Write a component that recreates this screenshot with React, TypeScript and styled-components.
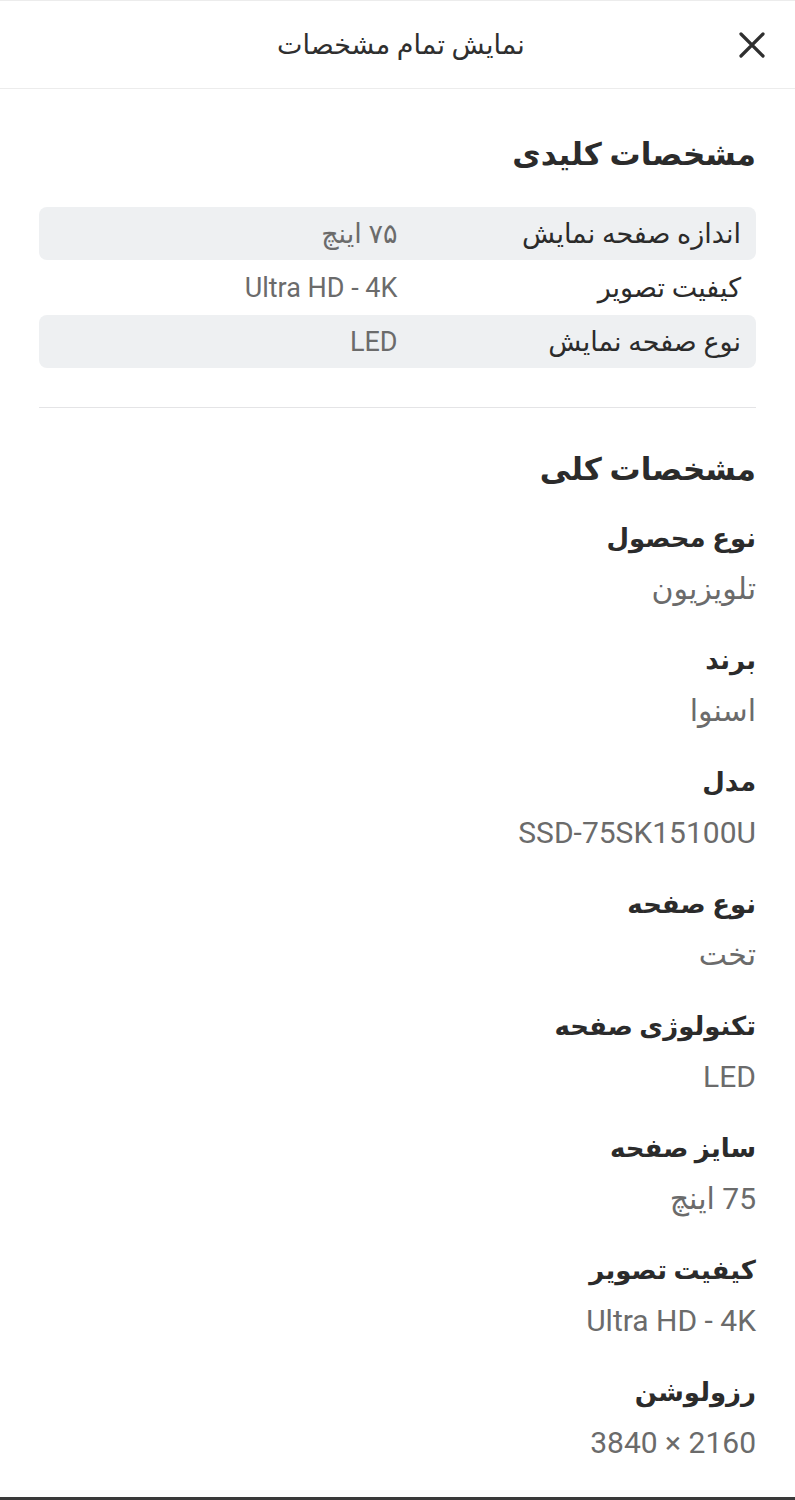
import React from "react";
import styled, { createGlobalStyle } from "styled-components";

const GlobalStyle = createGlobalStyle`
  html, body {
    margin: 0;
    padding: 0;
    background: #fff;
  }
  body {
    font-family: Roboto, "DejaVu Sans", sans-serif;
    color: #2b2b2b;
  }
`;

const Page = styled.div`
  direction: rtl;
  width: 795px;
  min-height: 1500px;
  box-sizing: border-box;
  border-bottom: 3px solid #3a3a3a;
  display: flex;
  flex-direction: column;
`;

const Header = styled.header`
  height: 89px;
  border-top: 1px solid #ececec;
  border-bottom: 1px solid #ececec;
  box-sizing: border-box;
  display: flex;
  align-items: center;
  padding: 0 27px 0 24px;
`;

const HeaderTitle = styled.h1`
  flex: 1;
  margin: 0;
  text-align: center;
  font-size: 27px;
  font-weight: 400;
  color: #2f2f2f;
  padding-left: 42px;
`;

const CloseButton = styled.button`
  background: none;
  border: 0;
  padding: 0;
  width: 32px;
  height: 32px;
  display: flex;
  align-items: center;
  justify-content: center;
  color: #2f2f2f;
  cursor: pointer;
`;

const Content = styled.main`
  padding: 0 39px;
`;

const SectionTitle = styled.h2<{ $size: number }>`
  margin: 0;
  font-size: ${({ $size }) => $size}px;
  font-weight: 700;
  color: #2b2b2b;
  line-height: 1.4;
`;

const KeySection = styled.section`
  padding: 44px 0 39px;
  border-bottom: 1px solid #e4e4e6;
`;

const KeyTable = styled.div`
  margin-top: 31px;
  display: flex;
  flex-direction: column;
  gap: 1px;
`;

const KeyRow = styled.div<{ $shaded: boolean }>`
  display: grid;
  grid-template-columns: 1fr 1fr;
  align-items: center;
  height: 53px;
  border-radius: 8px;
  background: ${({ $shaded }) => ($shaded ? "#eef0f2" : "transparent")};
`;

const KeyLabel = styled.span`
  padding-right: 15px;
  font-size: 27px;
  color: #2b2b2b;
`;

const KeyValue = styled.span`
  font-size: 27px;
  color: #6b6b6b;
`;

const GeneralSection = styled.section`
  padding-top: 40px;
`;

const SpecList = styled.dl`
  margin: 28px 0 0;
  display: flex;
  flex-direction: column;
  gap: 35px;
`;

const SpecItem = styled.div`
  display: flex;
  flex-direction: column;
  gap: 13px;
`;

const SpecLabel = styled.dt`
  font-size: 26px;
  font-weight: 700;
  color: #2b2b2b;
  line-height: 37px;
`;

const SpecValue = styled.dd`
  margin: 0;
  font-size: 30px;
  color: #6b6b6b;
  line-height: 37px;
`;

const keySpecs = [
  { label: "اندازه صفحه نمایش", value: "۷۵ اینچ" },
  { label: "کیفیت تصویر", value: "Ultra HD - 4K" },
  { label: "نوع صفحه نمایش", value: "LED" },
];

const generalSpecs = [
  { label: "نوع محصول", value: "تلویزیون" },
  { label: "برند", value: "اسنوا" },
  { label: "مدل", value: "SSD-75SK15100U" },
  { label: "نوع صفحه", value: "تخت" },
  { label: "تکنولوژی صفحه", value: "LED" },
  { label: "سایز صفحه", value: "75 اینچ" },
  { label: "کیفیت تصویر", value: "Ultra HD - 4K" },
  { label: "رزولوشن", value: "3840 × 2160" },
];

const CloseIcon = () => (
  <svg width="28" height="28" viewBox="0 0 28 28" fill="none">
    <path
      d="M3 3L25 25M25 3L3 25"
      stroke="currentColor"
      strokeWidth="3.2"
      strokeLinecap="round"
    />
  </svg>
);

export default function App() {
  return (
    <>
      <GlobalStyle />
      <Page>
        <Header>
          <CloseButton aria-label="بستن">
            <CloseIcon />
          </CloseButton>
          <HeaderTitle>نمایش تمام مشخصات</HeaderTitle>
        </Header>
        <Content>
          <KeySection>
            <SectionTitle $size={31}>مشخصات کلیدی</SectionTitle>
            <KeyTable>
              {keySpecs.map((spec, idx) => (
                <KeyRow key={spec.label} $shaded={idx % 2 === 0}>
                  <KeyLabel>{spec.label}</KeyLabel>
                  <KeyValue>{spec.value}</KeyValue>
                </KeyRow>
              ))}
            </KeyTable>
          </KeySection>
          <GeneralSection>
            <SectionTitle $size={31}>مشخصات کلی</SectionTitle>
            <SpecList>
              {generalSpecs.map((spec) => (
                <SpecItem key={spec.label + spec.value}>
                  <SpecLabel>{spec.label}</SpecLabel>
                  <SpecValue>
                    <bdi>{spec.value}</bdi>
                  </SpecValue>
                </SpecItem>
              ))}
            </SpecList>
          </GeneralSection>
        </Content>
      </Page>
    </>
  );
}
